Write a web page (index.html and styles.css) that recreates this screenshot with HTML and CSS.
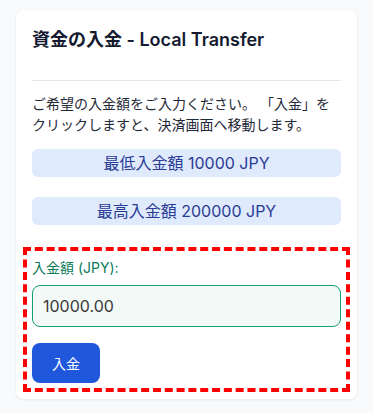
FILE: index.html
```html
<!DOCTYPE html>
<html lang="ja">
<head>
<meta charset="utf-8">
<title>資金の入金 - Local Transfer</title>
<link rel="stylesheet" href="styles.css">
</head>
<body>
<div class="card">
  <h2 class="title">資金の入金 - Local Transfer</h2>
  <hr class="divider">
  <p class="desc">ご希望の入金額をご入力ください。 「入金」をクリックしますと、決済画面へ移動します。</p>
  <div class="limit">最低入金額 10000 JPY</div>
  <div class="limit limit-max">最高入金額 200000 JPY</div>
  <div class="highlight">
    <form class="form">
      <label class="label" for="amount">入金額 (JPY):</label>
      <input class="input" id="amount" type="text" value="10000.00">
      <button class="btn" type="button">入金</button>
    </form>
  </div>
</div>
</body>
</html>
```
FILE: styles.css
```css
html, body {
  margin: 0;
  padding: 0;
  background: #f8fafc;
}
body {
  padding: 10px 16px;
  font-family: Inter, "Noto Sans CJK JP", sans-serif;
  color: #111827;
}
.card {
  background: #ffffff;
  border-radius: 8px;
  box-shadow: 0 1px 3px rgba(15, 23, 42, 0.08);
  padding: 16px;
  box-sizing: border-box;
}
.title {
  margin: 0;
  font-size: 18px;
  line-height: 28px;
  font-weight: 600;
  color: #151a30;
}
.divider {
  border: 0;
  border-top: 1px solid #e5e7eb;
  margin: 26px 0 12px;
}
.desc {
  margin: 0;
  font-size: 14px;
  line-height: 21px;
  color: #1f2937;
  text-spacing-trim: space-all;
}
.limit {
  margin-top: 14px;
  background: #dfeafd;
  color: #2a3b94;
  border-radius: 6px;
  text-align: center;
  font-size: 16px;
  line-height: 28px;
}
.limit-max {
  margin-top: 20px;
}
.highlight {
  margin: 22px -9px -9px;
  border: 4px dashed #ff0000;
  padding: 5px;
}
.form {
  margin: 0;
  display: flex;
  flex-direction: column;
  align-items: flex-start;
}
.label {
  display: block;
  font-size: 14px;
  line-height: 24px;
  color: #0a7a5a;
  margin-bottom: 5px;
}
.input {
  display: block;
  width: 100%;
  box-sizing: border-box;
  height: 42px;
  border: 1px solid #13a073;
  border-radius: 8px;
  background: #f3f9f6;
  padding: 0 10px;
  font-family: Inter, "Noto Sans CJK JP", sans-serif;
  font-size: 16px;
  color: #3a3a3a;
  outline: none;
}
.btn {
  margin-top: 16px;
  height: 40px;
  padding: 0 20px;
  border: 0;
  border-radius: 8px;
  background: #1e56dc;
  color: #ffffff;
  font-family: Inter, "Noto Sans CJK JP", sans-serif;
  font-size: 14px;
}
```
